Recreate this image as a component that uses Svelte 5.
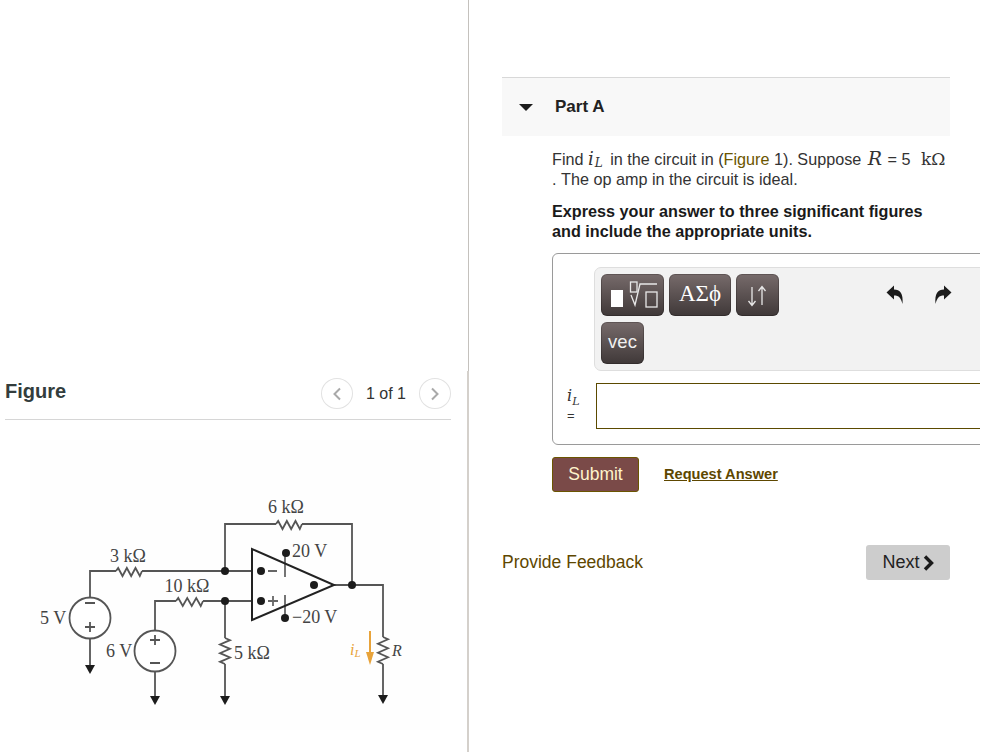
<script>
  // zigzag resistors, drawn from a start point
  function hZig(x, y, w) {
    const step = w / 6;
    let d = `M${x} ${y}`;
    for (let i = 0; i < 6; i++) {
      d += ` L${x + step * (i + 0.5)} ${y + (i % 2 ? 5 : -3)}`;
    }
    return d + ` L${x + w} ${y}`;
  }
  function vZig(x, y, h) {
    const step = h / 6;
    let d = `M${x} ${y}`;
    for (let i = 0; i < 6; i++) {
      d += ` L${x + (i % 2 ? -5 : 5)} ${y + step * (i + 0.5)}`;
    }
    return d + ` L${x} ${y + h}`;
  }

  const nodes = [
    [225, 571], [225, 601], [261, 571], [261, 601],
    [314, 585], [352, 585], [286, 553], [285, 618]
  ];
  const grounds = [[90, 665], [155, 696], [225, 696], [383, 695]];
</script>

<div class="page">
  <section class="figure-col">
    <header class="figure-head">
      <h2>Figure</h2>
      <div class="pager">
        <button class="round" aria-label="Previous">
          <svg width="10" height="14" viewBox="0 0 10 14"><path d="M8 1.5 L2.5 7 L8 12.5" /></svg>
        </button>
        <span>1 of 1</span>
        <button class="round" aria-label="Next">
          <svg width="10" height="14" viewBox="0 0 10 14"><path d="M2 1.5 L7.5 7 L2 12.5" /></svg>
        </button>
      </div>
    </header>

    <svg class="circuit" width="467" height="332" viewBox="0 420 467 332">
      <rect x="30" y="440" width="410" height="290" fill="#fefefe" />
      <g class="wire">
        <path d="M90 597 V571 H116 M142 571 H225 V524 H276 M302 524 H352 V585" />
        <path d="M225 571 H252 M155 631 V601 H176 M203 601 H252 M225 601 V638 M225 664 V696" />
        <path d="M90 638 V665 M155 671 V696" />
        <path d="M334 585 H383 V637 M383 664 V695" />
        <path d={hZig(116, 571, 26)} />
        <path d={hZig(176, 601, 27)} />
        <path d={hZig(276, 524, 26)} />
        <path d={vZig(225, 638, 26)} />
        <path d={vZig(383, 637, 27)} />
        <circle cx="90" cy="618" r="20.5" fill="#fff" />
        <circle cx="155" cy="651" r="20.5" fill="#fff" />
        <path d="M85 603 H95 M85 627 H95 M90 622 V632" />
        <path d="M150 640 H160 M155 635 V645 M150 663 H160" />
        <path class="rail" d="M285 553 V577 M285 595 V618 M268 571 H277 M268 601 H278 M273 596 V606" />
      </g>
      <path class="amp" d="M252 549 V620 L334 585 Z" />
      {#each nodes as [x, y]}
        <circle cx={x} cy={y} r="4" fill="#1c1c1c" />
      {/each}
      {#each grounds as [x, y]}
        <path d="M{x - 5} {y} H{x + 5} L{x} {y + 9} Z" fill="#1c1c1c" />
      {/each}
      <path class="current" d="M370 631 V654" />
      <path d="M366 652 H374 L370 665 Z" fill="#e8a33a" />

      <g class="labels">
        <text x="128" y="562" text-anchor="middle">3 kΩ</text>
        <text x="187" y="592" text-anchor="middle">10 kΩ</text>
        <text x="286" y="513" text-anchor="middle">6 kΩ</text>
        <text x="40" y="624">5 V</text>
        <text x="106" y="657">6 V</text>
        <text x="292" y="557">20 V</text>
        <text x="292" y="623">−20 V</text>
        <text x="234" y="659">5 kΩ</text>
        <text class="ital" x="392" y="656">R</text>
        <text class="ital orange" x="350" y="655">i<tspan font-size="11" dy="2">L</tspan></text>
      </g>
    </svg>
  </section>

  <section class="part-col">
    <div class="part-head">
      <span class="caret"></span>
      <h3>Part A</h3>
    </div>

    <div class="body">
      <p>
        Find <span class="math inline-i">i<sub>L</sub></span> in the circuit in (<span class="link">Figure</span> 1). Suppose
        <span class="math big-r">R</span> = 5 <span class="unit">kΩ</span><br />. The op amp in the circuit is ideal.
      </p>
      <p class="strong">Express your answer to three significant figures<br />and include the appropriate units.</p>

      <div class="answer">
        <div class="toolbar">
          <div class="tools">
            <div class="tool-row">
              <button class="tool templates" aria-label="Templates">
                <svg width="63" height="42" viewBox="0 0 63 42">
                  <rect x="10" y="16" width="12" height="17" fill="#fff" />
                  <rect x="29.5" y="8" width="6.5" height="10" class="thin" />
                  <path d="M30 21 L34 31 L39 10 H56" class="thin" />
                  <rect x="45" y="18" width="11" height="15" class="thin" />
                </svg>
              </button>
              <button class="tool greek">ΑΣϕ</button>
              <button class="tool arrows" aria-label="Reorder">
                <svg width="43" height="42" viewBox="0 0 43 42">
                  <path d="M16 13 V31 M12.5 27 L16 31.5 L19.5 27 M26 31 V13 M22.5 17 L26 12.5 L29.5 17" class="thin" />
                </svg>
              </button>
            </div>
            <button class="tool vec">vec</button>
          </div>
          <div class="history">
            <svg width="18" height="20" viewBox="0 0 18 20"><path d="M0.5 7.5 L8 0.5 V4.5 C14 4.5 17.5 8.5 16.5 19 C15 13 13 10.5 8 10.5 V14.5 Z" /></svg>
            <svg width="18" height="20" viewBox="0 0 18 20"><path d="M17.5 7.5 L10 0.5 V4.5 C4 4.5 0.5 8.5 1.5 19 C3 13 5 10.5 10 10.5 V14.5 Z" /></svg>
          </div>
        </div>
        <div class="input-row">
          <label for="answer-field"><span class="math">i<sub>L</sub></span><span class="eq">=</span></label>
          <input id="answer-field" type="text" />
        </div>
      </div>

      <div class="actions">
        <button class="submit">Submit</button>
        <a href="#answer" class="request">Request Answer</a>
      </div>
    </div>

    <div class="foot">
      <a href="#feedback" class="feedback">Provide Feedback</a>
      <button class="next">Next
        <svg width="11" height="16" viewBox="0 0 11 16"><path d="M2 1.5 L8.5 8 L2 14.5" /></svg>
      </button>
    </div>
  </section>
</div>

<style>
  :global(body) {
    margin: 0;
    background: #fff;
  }

  .page {
    display: flex;
    height: 752px;
    width: 980px;
    overflow: hidden;
    font-family: "Liberation Sans", Arial, sans-serif;
    font-size: 16px;
    color: #333;
  }

  /* divider is thin above the figure header and wider from there down */
  .figure-col {
    flex: none;
    box-sizing: border-box;
    width: 469px;
    padding-top: 378px;
    background:
      linear-gradient(#c4c1bd, #c4c1bd) right top / 1px 371px no-repeat,
      linear-gradient(#d4d0cb, #d4d0cb) right bottom / 2px 381px no-repeat;
  }

  .figure-head {
    display: flex;
    justify-content: space-between;
    align-items: flex-start;
    height: 41px;
    margin: 0 18px 0 5px;
    border-bottom: 1px solid #d6d6d6;
  }

  .figure-head h2 {
    margin: 2px 0 0;
    font-size: 20px;
    line-height: 23px;
    font-weight: 700;
    color: #333d3d;
  }

  .pager {
    display: flex;
    align-items: center;
    gap: 13px;
    color: #333;
  }

  .round {
    width: 32px;
    height: 31px;
    padding: 0;
    display: flex;
    align-items: center;
    justify-content: center;
    background: #fff;
    border: 1px solid #e2e2e2;
    border-radius: 50%;
  }

  .round path {
    fill: none;
    stroke: #a9a9a9;
    stroke-width: 2;
  }

  .circuit {
    display: block;
  }

  .wire path,
  .wire circle {
    stroke: #555;
    stroke-width: 1.8;
  }

  .wire path {
    fill: none;
  }

  .wire .rail {
    stroke: #666;
  }

  .amp {
    fill: none;
    stroke: #222;
    stroke-width: 2;
  }

  .current {
    stroke: #e8a33a;
    stroke-width: 2;
    fill: none;
  }

  .labels text {
    font-family: "Liberation Serif", "Times New Roman", serif;
    font-size: 18px;
    fill: #444;
    -webkit-text-stroke: 0.2px #444;
  }

  .labels .ital {
    font-style: italic;
    font-size: 16px;
  }

  .labels .orange {
    fill: #e8a33a;
    -webkit-text-stroke: 0;
  }

  .part-col {
    flex: 1;
    min-width: 0;
    padding: 77px 0 0 33px;
    box-sizing: border-box;
  }

  .part-head {
    display: flex;
    align-items: center;
    width: 448px;
    height: 58px;
    border-top: 1px solid #d8d8d8;
    background: #f8f8f8;
  }

  .caret {
    margin-left: 17px;
    width: 0;
    height: 0;
    border-left: 7.5px solid transparent;
    border-right: 7.5px solid transparent;
    border-top: 7px solid #1c1c1c;
  }

  .part-head h3 {
    margin: 0 0 0 22px;
    font-size: 17px;
    font-weight: 700;
    color: #222;
  }

  .body {
    padding: 13px 0 0 50px;
  }

  p {
    margin: 0 0 12px;
    font-size: 16.2px;
    line-height: 20px;
    white-space: nowrap;
  }

  p.strong {
    font-weight: 700;
    color: #1a1a1a;
  }

  .math {
    font-family: "DejaVu Serif", "Liberation Serif", serif;
    font-style: italic;
    font-size: 18px;
    line-height: 1;
  }

  .math sub {
    font-size: 12px;
    line-height: 0;
  }

  .inline-i sub {
    font-size: 12px;
    vertical-align: -2px;
    margin: 0 3px 0 1px;
  }

  .big-r {
    font-size: 19px;
    margin: 0 1px 0 2px;
  }

  .unit {
    margin-left: 6px;
    font-family: "DejaVu Serif", "Liberation Serif", serif;
    font-size: 17px;
    line-height: 1;
  }

  .link {
    color: #6b5500;
  }

  .answer {
    width: 460px;
    height: 192px;
    box-sizing: border-box;
    padding: 13px 0 0 41px;
    border: 1px solid #9a9a9a;
    border-radius: 6px;
  }

  .toolbar {
    display: flex;
    justify-content: space-between;
    width: 400px;
    height: 104px;
    box-sizing: border-box;
    padding: 6px 0 0 6px;
    background: #f2f2f2;
    border: 1px solid #dedede;
    border-radius: 7px;
  }

  .tools {
    display: flex;
    flex-direction: column;
    gap: 6px;
  }

  .tool-row {
    display: flex;
    gap: 5px;
  }

  .tool {
    height: 42px;
    padding: 0 0 2px;
    border: 0;
    border-radius: 6px;
    color: #fff;
    background: linear-gradient(#776b6b, #3f3838);
    box-shadow: inset 0 0 0 1px rgba(0, 0, 0, 0.2);
    display: block;
  }

  .tool svg {
    display: block;
  }

  .thin {
    fill: none;
    stroke: #e8e8e8;
    stroke-width: 1.3;
  }

  .templates {
    width: 63px;
  }

  .greek {
    width: 62px;
    font-family: "Liberation Serif", "DejaVu Serif", serif;
    font-size: 23px;
  }

  .arrows,
  .vec {
    width: 43px;
  }

  .vec {
    font-family: "Liberation Sans", Arial, sans-serif;
    font-size: 18.5px;
    color: #f0f0f0;
  }

  .history {
    display: flex;
    gap: 30px;
    padding: 11px 29px 0 0;
    height: 20px;
    margin-right: 12px;
  }

  .history path {
    fill: #1c1c1c;
  }

  .input-row {
    display: flex;
    align-items: flex-start;
    margin: 12px 0 0 -41px;
  }

  label {
    width: 43px;
    flex: none;
    box-sizing: border-box;
    padding: 3px 0 0 14px;
    color: #333;
  }

  label .math {
    display: block;
    font-size: 16px;
    line-height: 19px;
  }

  label .math sub {
    font-size: 11px;
  }

  .eq {
    display: block;
    margin-top: 4px;
    font-size: 13px;
    line-height: 14px;
  }

  input {
    flex: none;
    width: 400px;
    height: 46px;
    box-sizing: border-box;
    border: 1px solid #5b4a00;
    background: #fff;
    margin: 0;
    padding: 0;
  }

  .actions {
    display: flex;
    align-items: center;
    gap: 25px;
    margin-top: 12px;
  }

  .submit {
    width: 87px;
    height: 35px;
    padding: 0;
    background: #7a4a48;
    border: 1px solid #6b5500;
    border-radius: 3px;
    color: #fff4cc;
    font-family: "Liberation Sans", Arial, sans-serif;
    font-size: 17.5px;
  }

  .request {
    margin-bottom: 2px;
    color: #5e4700;
    font-size: 14.6px;
    font-weight: 700;
  }

  .foot {
    display: flex;
    justify-content: space-between;
    align-items: center;
    width: 448px;
    margin-top: 53px;
  }

  .feedback {
    color: #5e4700;
    font-size: 17.5px;
    text-decoration: none;
  }

  .next {
    display: flex;
    align-items: center;
    justify-content: center;
    gap: 3px;
    width: 84px;
    height: 35px;
    padding: 0;
    background: #cdcdcd;
    border: 0;
    border-radius: 3px;
    color: #222;
    font-family: "Liberation Sans", Arial, sans-serif;
    font-size: 18px;
  }

  .next path {
    fill: none;
    stroke: #1a1a1a;
    stroke-width: 3.4;
  }
</style>
